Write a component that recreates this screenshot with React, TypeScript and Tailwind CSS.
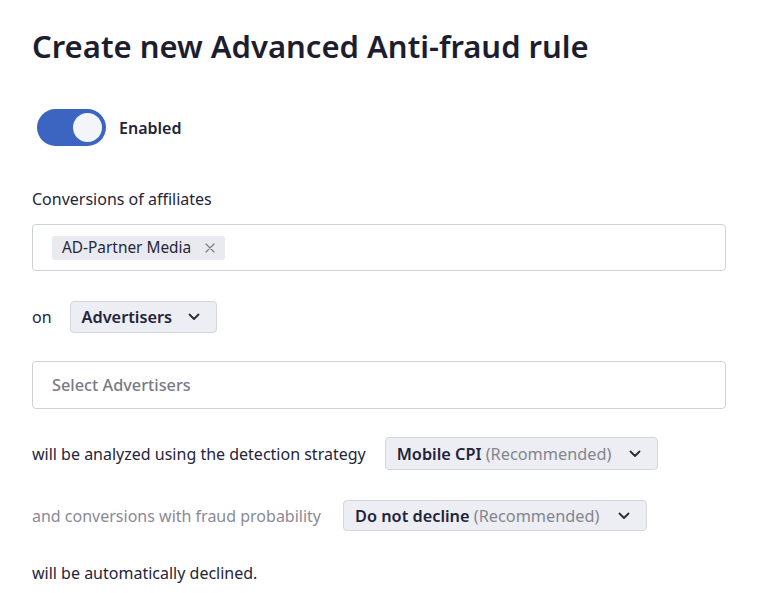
import React from "react";

function Chevron() {
  return (
    <svg width="12" height="8" viewBox="0 0 12 8" fill="none" className="shrink-0">
      <path d="M1.5 1.5l4.5 4.5 4.5-4.5" stroke="#2a2a3a" strokeWidth="1.8" strokeLinecap="round" strokeLinejoin="round" />
    </svg>
  );
}

function Dropdown({ value, hint, className }: { value: string; hint?: string; className: string }) {
  return (
    <div
      className={`flex items-center justify-between rounded-[4px] border border-[#d3d6de] bg-[#eceef3] pl-[11px] pr-[16px] ${className}`}
    >
      <span className="text-[16.3px] leading-5 whitespace-nowrap">
        <span className="font-semibold text-[#23233a]">{value}</span>
        {hint && <span className="text-[#85858f]"> {hint}</span>}
      </span>
      <Chevron />
    </div>
  );
}

export default function App() {
  return (
    <div
      className="min-h-screen bg-white px-8 pt-[26px] text-[#25253a]"
      style={{ fontFamily: '"Noto Sans", "Open Sans", sans-serif' }}
    >
      {/* Heading */}
      <h1 className="h-10 text-[31px] font-semibold leading-10 text-[#1d1d30]">
        Create new Advanced Anti-fraud rule
      </h1>

      {/* Enabled switch */}
      <div className="mt-[43px] flex items-center gap-[13px] pl-[5px]">
        <div className="flex h-[37px] w-[69px] items-center justify-end rounded-full bg-[#3b65c0] pr-[4px]">
          <div className="h-[29px] w-[29px] rounded-full bg-[#f3f5f8]" />
        </div>
        <span className="text-[16px] font-semibold text-[#23233a]">Enabled</span>
      </div>

      <p className="mt-[43px] text-[16px] leading-5">Conversions of affiliates</p>

      {/* Affiliates multiselect */}
      <div className="mt-[15px] flex h-[47px] w-[694px] items-center rounded-[4px] border border-[#cdd0d6] pl-[19px]">
        <span className="flex h-6 items-center gap-[14px] rounded-[2px] bg-[#e9eaf0] pl-[10px] pr-[10px] text-[15.4px] text-[#25253a]">
          AD-Partner Media
          <svg width="10" height="10" viewBox="0 0 10 10" fill="none">
            <path d="M1 1l8 8M9 1l-8 8" stroke="#7c7c88" strokeWidth="1.2" strokeLinecap="round" />
          </svg>
        </span>
      </div>

      {/* on row */}
      <div className="mt-[30px] flex items-center gap-[18px]">
        <span className="text-[16px] leading-5">on</span>
        <Dropdown value="Advertisers" className="h-8 w-[147px]" />
      </div>

      {/* Advertisers select */}
      <div className="mt-[28px] flex h-[48px] w-[694px] items-center rounded-[4px] border border-[#cdd0d6] pl-[19px]">
        <span className="text-[16.3px] font-medium text-[#7a7a86]">Select Advertisers</span>
      </div>

      {/* Strategy */}
      <div className="mt-[28px] flex items-center gap-[19px]">
        <span className="text-[16px] leading-5">will be analyzed using the detection strategy</span>
        <Dropdown value="Mobile CPI" hint="(Recommended)" className="h-[33px] w-[273px]" />
      </div>

      {/* Fraud probability */}
      <div className="mt-[30px] flex items-center gap-[22px]">
        <span className="text-[16px] leading-5 text-[#8a8a95]">and conversions with fraud probability</span>
        <Dropdown value="Do not decline" hint="(Recommended)" className="h-[31px] w-[304px]" />
      </div>

      <p className="mt-[32px] text-[16px] leading-5">will be automatically declined.</p>
    </div>
  );
}
